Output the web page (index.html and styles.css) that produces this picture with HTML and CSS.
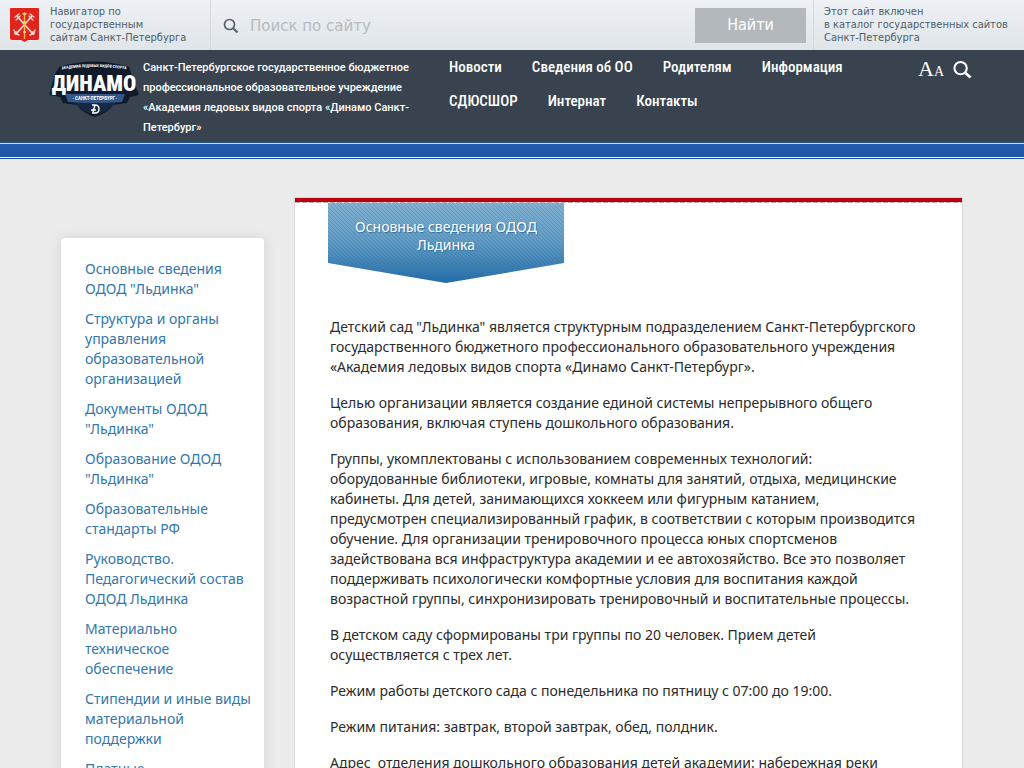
FILE: index.html
```html
<!DOCTYPE html>
<html lang="ru">
<head>
<meta charset="utf-8">
<meta name="viewport" content="width=device-width, initial-scale=1">
<title>Основные сведения ОДОД Льдинка</title>
<link rel="stylesheet" href="styles.css">
</head>
<body>
<div class="gov-bar">
  <a class="gov-nav" href="#">
    <svg class="gov-crest" viewBox="0 0 29 34" aria-hidden="true">
      <path d="M1 0H28Q29 0 29 1V30Q29 32 27 32H18L14.500 34L11 32H2Q0 32 0 30V1Q0 0 1 0Z" fill="#e0241b"/>
      <g fill="none" stroke="#e3d5d0" stroke-width="1.800" stroke-linecap="round">
        <path d="M7 8L22 25M22 8L7 25"/>
        <path d="M5 9L9 6M20 6L24 9M4 22Q5 26 9 27M25 22Q24 26 20 27M6 12L10 8M19 8L23 12" stroke-width="1.300"/>
        <circle cx="6" cy="25" r="1"/><circle cx="23" cy="25" r="1"/>
      </g>
      <path d="M14.500 4V31" stroke="#f4bd4f" stroke-width="1.400"/>
      <path d="M12 5H17L16 7H13ZM13 14L14.500 12L16 14L14.500 17ZM13 23H16V25H13Z" fill="#f7ca60"/>
    </svg>
    <span>Навигатор по<br>государственным<br>сайтам Санкт-Петербурга</span>
  </a>
  <form class="gov-search">
    <label class="gov-label" for="q" aria-label="Поиск по сайту">
      <svg class="gov-lens" viewBox="0 0 16 16" aria-hidden="true"><circle cx="6.500" cy="6.500" r="5" fill="none" stroke="#59636c" stroke-width="1.700"/><path d="M10.500 10.500L14.500 14.500" stroke="#59636c" stroke-width="2.200"/></svg>
    </label>
    <input class="gov-input" id="q" type="text" placeholder="Поиск по сайту">
    <button class="gov-button" type="button">Найти</button>
  </form>
  <p class="gov-note">Этот сайт включен<br>в каталог государственных сайтов<br>Санкт-Петербурга</p>
</div>

<header class="header">
  <a class="brand" href="#">
    <svg class="logo" viewBox="0 0 90 56" role="img" aria-label="Динамо Санкт-Петербург">
      <path d="M10 6Q45-5 80 6L82 12L90 34L81 36L78 42L64 44Q59 52 46 56Q33 52 28 44L14 42L11 36L0 34L6 13Z" fill="#101a2b"/>
      <path d="M20 34H72L67 42Q58 51 46 54Q34 51 25 42Z" fill="#162844"/>
      <path d="M16 33L76 33L73 41Q46 43 19 41Z" fill="#345787"/>
      <path id="arc" d="M9 9Q45 3 81 9" fill="none"/>
      <text class="logo-top"><textPath href="#arc" startOffset="50%">АКАДЕМИЯ ЛЕДОВЫХ ВИДОВ СПОРТА</textPath></text>
      <text class="logo-name" x="45" y="30">ДИНАМО</text>
      <text class="logo-city" x="46" y="39">· САНКТ-ПЕТЕРБУРГ ·</text>
      <path d="M43 44H46Q50 44 50 48Q50 52 46 52H43M46 44L44 51M42 49H47" fill="none" stroke="#fff" stroke-width="1.400"/>
    </svg>
    <span class="brand-text">Санкт-Петербургское государственное бюджетное<br>профессиональное образовательное учреждение<br>«Академия ледовых видов спорта «Динамо Санкт-<br>Петербург»</span>
  </a>
  <nav class="menu">
    <a href="#">Новости</a>
    <a href="#">Сведения об ОО</a>
    <a href="#">Родителям</a>
    <a href="#">Информация</a>
    <a href="#">СДЮСШОР</a>
    <a href="#">Интернат</a>
    <a href="#">Контакты</a>
  </nav>
  <div class="tools">
    <a class="font-size" href="#" aria-label="Версия для слабовидящих"><span class="big-a">A</span><span class="small-a">A</span></a>
    <button class="find" type="button" aria-label="Поиск">
      <svg viewBox="0 0 20 20" aria-hidden="true"><circle cx="8" cy="8" r="6.500" fill="none" stroke="#fff" stroke-width="2.200"/><path d="M12.800 12.800L18.500 18" stroke="#fff" stroke-width="2.800"/></svg>
    </button>
  </div>
</header>
<div class="stripe"></div>

<div class="page">
  <aside class="sidebar">
    <ul class="side-list">
      <li><a href="#">Основные сведения<br>ОДОД "Льдинка"</a></li>
      <li><a href="#">Структура и органы<br>управления<br>образовательной<br>организацией</a></li>
      <li><a href="#">Документы ОДОД<br>"Льдинка"</a></li>
      <li><a href="#">Образование ОДОД<br>"Льдинка"</a></li>
      <li><a href="#">Образовательные<br>стандарты РФ</a></li>
      <li><a href="#">Руководство.<br>Педагогический состав<br>ОДОД Льдинка</a></li>
      <li><a href="#">Материально<br>техническое<br>обеспечение</a></li>
      <li><a href="#">Стипендии и иные виды<br>материальной<br>поддержки</a></li>
      <li><a href="#">Платные</a></li>
    </ul>
  </aside>
  <main class="content">
    <div class="stitch"></div>
    <div class="ribbon">
      <svg class="ribbon-shape" viewBox="0 0 236 80" preserveAspectRatio="none" aria-hidden="true">
        <defs>
          <linearGradient id="blue" x1="0" y1="0" x2="0" y2="1"><stop offset="0" stop-color="#82b1d1"/><stop offset="0.500" stop-color="#609ac4"/><stop offset="1" stop-color="#246ca8"/></linearGradient>
          <pattern id="hatch" width="4" height="4" patternUnits="userSpaceOnUse"><path d="M-1-1L5 5M-1 3L1 5M3-1L5 1" stroke="#315f86" stroke-opacity=".25"/></pattern>
        </defs>
        <path d="M0 0H236V60L118 80L0 60Z" fill="url(#blue)"/>
        <path d="M0 0H236V60L118 80L0 60Z" fill="url(#hatch)"/>
      </svg>
      <h1 class="title">Основные сведения ОДОД<br>Льдинка</h1>
    </div>
    <div class="article">
      <p>Детский сад "Льдинка" является структурным подразделением Санкт-Петербургского<br>государственного бюджетного профессионального образовательного учреждения<br>«Академия ледовых видов спорта «Динамо Санкт-Петербург».</p>
      <p>Целью организации является создание единой системы непрерывного общего<br>образования, включая ступень дошкольного образования.</p>
      <p>Группы, укомплектованы с использованием современных технологий:<br>оборудованные библиотеки, игровые, комнаты для занятий, отдыха, медицинские<br>кабинеты. Для детей, занимающихся хоккеем или фигурным катанием,<br>предусмотрен специализированный график, в соответствии с которым производится<br>обучение. Для организации тренировочного процесса юных спортсменов<br>задействована вся инфраструктура академии и ее автохозяйство. Все это позволяет<br>поддерживать психологически комфортные условия для воспитания каждой<br>возрастной группы, синхронизировать тренировочный и воспитательные процессы.</p>
      <p>В детском саду сформированы три группы по 20 человек. Прием детей<br>осуществляется с трех лет.</p>
      <p>Режим работы детского сада с понедельника по пятницу с 07:00 до 19:00.</p>
      <p>Режим питания: завтрак, второй завтрак, обед, полдник.</p>
      <p>Адрес&nbsp; отделения дошкольного образования детей академии: набережная реки</p>
    </div>
  </main>
</div>
</body>
</html>
```

FILE: styles.css
```css
* { box-sizing: border-box; }
html { overflow: hidden; height: 100%; }
body {
  margin: 0;
  height: 100%;
  overflow: hidden;
  background: #ececec;
  color: #2b2b2b;
  font: 14px/20px "Noto Sans", sans-serif;
}
a { color: inherit; text-decoration: none; }
p, ul, h1 { margin: 0; padding: 0; }

.gov-bar {
  display: grid;
  grid-template-columns: 211px 1fr 211px;
  height: 50px;
  background: linear-gradient(#eef1f5, #dfe5e9);
  color: #4e5d68;
  font: 11px/13px "DejaVu Sans Condensed", "DejaVu Sans", sans-serif;
}
.gov-nav {
  display: flex;
  gap: 11px;
  padding: 5px 0 0 10px;
  border-right: 1px solid #d3d8dc;
  white-space: nowrap;
}
.gov-crest { width: 29px; height: 34px; margin-top: 3px; }
.gov-search { display: flex; align-items: center; padding: 0 7px 0 12px; }
.gov-label { display: flex; padding: 2px 0 0; }
.gov-lens { width: 16px; height: 16px; }
.gov-input {
  flex: 1;
  min-width: 0;
  padding: 2px 11px 0;
  border: 0;
  background: none;
  font: 15px/20px "DejaVu Sans", sans-serif;
}
.gov-input::placeholder { color: #b6bbc0; opacity: 1; }
.gov-button {
  width: 111px;
  height: 35px;
  border: 0;
  background: #b3b8bd;
  color: #fff;
  font: 16px/20px "DejaVu Sans Condensed", "DejaVu Sans", sans-serif;
}
.gov-note { padding: 5px 0 0 10px; border-left: 1px solid #d3d8dc; white-space: nowrap; }

.header {
  display: grid;
  grid-template-columns: 388px 1fr 106px;
  padding-left: 49px;
  height: 92px;
  background: #38434f;
  color: #fff;
}
.brand { display: flex; gap: 4px; padding-top: 8px; }
.logo { flex: none; width: 90px; height: 56px; margin-top: 3px; }
.logo text { fill: #fff; text-anchor: middle; font-family: "Roboto Condensed", "Roboto", sans-serif; font-weight: bold; }
.logo .logo-top { font-size: 4px; }
.logo .logo-name { font-size: 22px; font-weight: 900; }
.logo .logo-city { font-size: 5px; }
.brand-text { font: 500 11px/20px "Roboto", sans-serif; white-space: nowrap; }
.menu {
  display: flex;
  flex-wrap: wrap;
  align-content: flex-start;
  column-gap: 30px;
  padding: 0 40px 0 12px;
  font: 500 15px/34px "Roboto Condensed", "Open Sans Condensed", "Roboto", sans-serif;
}
.tools { display: flex; align-items: center; gap: 9px; height: 40px; font-family: "Liberation Serif", serif; }
.font-size { line-height: 24px; }
.big-a { font-size: 22px; }
.small-a { font-size: 14px; }
.find { width: 19px; height: 20px; padding: 0; border: 0; background: none; }
.find svg { display: block; width: 19px; height: 20px; }
.stripe {
  height: 17px;
  border-top: 1px solid #26548c;
  border-bottom: 1px solid #174a93;
  background: linear-gradient(#c4dcf5 1px, #235caf 1px, #1e56a5 14px, #f3f7fc 14px);
}

.page {
  display: grid;
  grid-template-columns: 203px 1fr;
  gap: 31px;
  padding: 39px 62px 0 61px;
  align-items: start;
}
.sidebar {
  margin-top: 40px;
  padding: 21px 0 30px 24px;
  border-radius: 4px;
  background: #fff;
  box-shadow: 0 0 14px rgba(0, 0, 0, .12);
}
.side-list { list-style: none; color: #3277ad; white-space: nowrap; }
.side-list li { margin-bottom: 10px; }
.content {
  border-top: 4px solid #b9000f;
  background: #fff;
  box-shadow: 0 0 1px 1px rgba(0, 0, 0, .07);
}
.stitch { height: 1px; background: repeating-linear-gradient(90deg, #c9a8aa 0 5px, #fff 5px 7px); }
.ribbon { display: grid; width: 236px; margin-left: 33px; }
.ribbon-shape, .title { grid-area: 1 / 1; }
.ribbon-shape { width: 100%; height: 80px; }
.title {
  padding-top: 15px;
  color: #fff;
  font: 14px/18px "Noto Sans", sans-serif;
  text-align: center;
  text-shadow: 1px 1px 1px #34709e;
  z-index: 1;
}
.article { padding: 34px 0 40px 35px; white-space: nowrap; }
.article p { margin-bottom: 16px; }
```
